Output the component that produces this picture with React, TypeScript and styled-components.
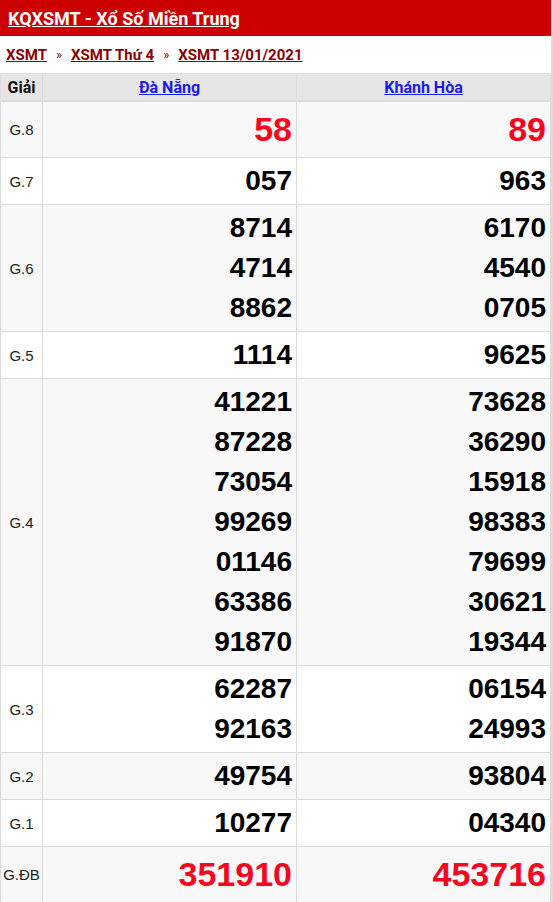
import styled, { createGlobalStyle } from "styled-components"

const GlobalStyle = createGlobalStyle`
	html, body {
		margin: 0;
		padding: 0;
		background: #fff;
	}
`

type Prize = {
	label: string
	daNang: string[]
	khanhHoa: string[]
	big?: boolean
}

const PRIZES: Prize[] = [
	{ label: "G.8", daNang: ["58"], khanhHoa: ["89"], big: true },
	{ label: "G.7", daNang: ["057"], khanhHoa: ["963"] },
	{ label: "G.6", daNang: ["8714", "4714", "8862"], khanhHoa: ["6170", "4540", "0705"] },
	{ label: "G.5", daNang: ["1114"], khanhHoa: ["9625"] },
	{
		label: "G.4",
		daNang: ["41221", "87228", "73054", "99269", "01146", "63386", "91870"],
		khanhHoa: ["73628", "36290", "15918", "98383", "79699", "30621", "19344"],
	},
	{ label: "G.3", daNang: ["62287", "92163"], khanhHoa: ["06154", "24993"] },
	{ label: "G.2", daNang: ["49754"], khanhHoa: ["93804"] },
	{ label: "G.1", daNang: ["10277"], khanhHoa: ["04340"] },
	{ label: "G.ĐB", daNang: ["351910"], khanhHoa: ["453716"], big: true },
]

const Page = styled.div`
	width: 551px;
	border-right: 2px solid #dcdcdc;
	font-family: Roboto, "Liberation Sans", Arial, sans-serif;
`

const TitleBar = styled.div`
	height: 36px;
	background: #cc0000;
	display: flex;
	align-items: center;
	padding-left: 8px;
`

const Title = styled.a`
	color: #fff;
	font-size: 18px;
	font-weight: 700;
	text-decoration: underline;
`

const Crumbs = styled.div`
	height: 37px;
	display: flex;
	align-items: center;
	gap: 9px;
	padding-left: 6px;
	font-size: 15px;
	font-weight: 700;
`

const Crumb = styled.a`
	color: #8b0000;
	text-decoration: underline;
`

const Sep = styled.span`
	color: #8b0000;
	font-weight: 400;
	font-size: 13px;
`

const Table = styled.table`
	width: 551px;
	border-collapse: collapse;
	table-layout: fixed;
	border-top: 1px solid #dcdcdc;
`

const HeadCell = styled.th<{ $link?: boolean }>`
	height: 26px;
	padding: 0;
	background: #e6e6e6;
	border: 1px solid #dcdcdc;
	border-bottom-width: 2px;
	font-family: Roboto, "Liberation Sans", sans-serif;
	font-size: 16px;
	font-weight: 700;
	text-align: center;
	color: ${(p) => (p.$link ? "#1a1aee" : "#111")};
	text-decoration: ${(p) => (p.$link ? "underline" : "none")};
`

const Row = styled.tr<{ $shade: boolean }>`
	background: ${(p) => (p.$shade ? "#f8f8f8" : "#fff")};
`

const LabelCell = styled.td`
	border: 1px solid #dcdcdc;
	padding: 0;
	text-align: center;
	font-family: "Liberation Sans", Arial, sans-serif;
	font-size: 15px;
	color: #222;
`

const NumCell = styled.td`
	border: 1px solid #dcdcdc;
	padding: 3px 4px 3px 0;
	text-align: right;
	vertical-align: middle;
`

const Num = styled.div<{ $big?: boolean }>`
	font-family: "Liberation Sans", Arial, sans-serif;
	font-weight: 700;
	font-size: ${(p) => (p.$big ? "34px" : "28px")};
	line-height: ${(p) => (p.$big ? "49px" : "40px")};
	color: ${(p) => (p.$big ? "#f5081f" : "#000")};
`

const App = () => {
	return (
		<Page>
			<GlobalStyle />
			<TitleBar>
				<Title>KQXSMT - Xổ Số Miền Trung</Title>
			</TitleBar>
			<Crumbs>
				<Crumb>XSMT</Crumb>
				<Sep>»</Sep>
				<Crumb>XSMT Thứ 4</Crumb>
				<Sep>»</Sep>
				<Crumb>XSMT 13/01/2021</Crumb>
			</Crumbs>
			<Table>
				<colgroup>
					<col style={{ width: 42 }} />
					<col />
					<col />
				</colgroup>
				<thead>
					<tr>
						<HeadCell>Giải</HeadCell>
						<HeadCell $link>Đà Nẵng</HeadCell>
						<HeadCell $link>Khánh Hòa</HeadCell>
					</tr>
				</thead>
				<tbody>
					{PRIZES.map((p, i) => (
						<Row key={p.label} $shade={i % 2 === 0}>
							<LabelCell>{p.label}</LabelCell>
							<NumCell>
								{p.daNang.map((n) => (
									<Num key={n} $big={p.big}>
										{n}
									</Num>
								))}
							</NumCell>
							<NumCell>
								{p.khanhHoa.map((n) => (
									<Num key={n} $big={p.big}>
										{n}
									</Num>
								))}
							</NumCell>
						</Row>
					))}
				</tbody>
			</Table>
		</Page>
	)
}

export default App
